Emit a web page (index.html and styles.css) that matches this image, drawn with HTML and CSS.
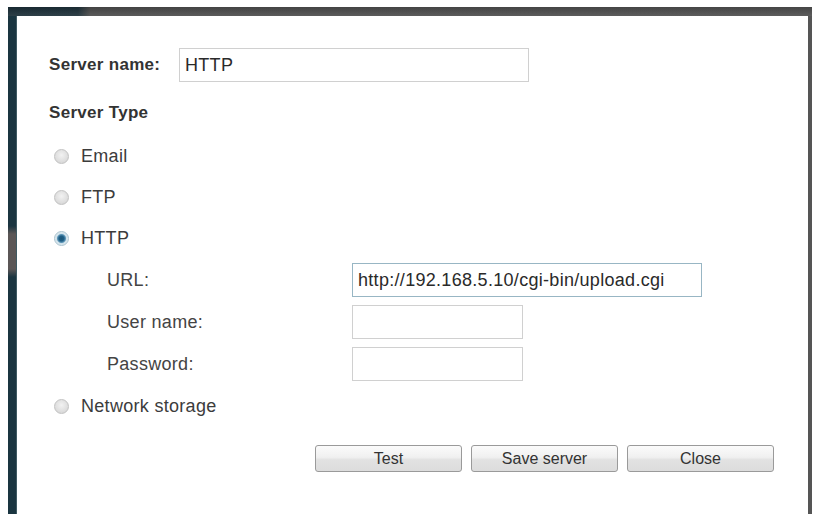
FILE: index.html
```html
<!DOCTYPE html>
<html>
<head>
<meta charset="utf-8">
<link rel="stylesheet" href="styles.css">
</head>
<body>
<div class="frame">
  <div class="topbar"></div>
  <div class="body">
    <div class="lstrip"></div>
    <div class="content">
      <div class="row-name">
        <label class="bold name-label">Server name:</label>
        <input class="field field-name" type="text" value="HTTP">
      </div>
      <div class="bold type-title">Server Type</div>
      <label class="radio-row"><input class="radio" type="radio" name="t"><span>Email</span></label>
      <label class="radio-row"><input class="radio" type="radio" name="t"><span>FTP</span></label>
      <label class="radio-row"><input class="radio" type="radio" name="t" checked><span>HTTP</span></label>
      <div class="sub">
        <div class="sub-row"><span class="sub-label">URL:</span><input class="field field-url" type="text" value="http://192.168.5.10/cgi-bin/upload.cgi"></div>
        <div class="sub-row"><span class="sub-label">User name:</span><input class="field field-short" type="text" value=""></div>
        <div class="sub-row"><span class="sub-label">Password:</span><input class="field field-short" type="password" value=""></div>
      </div>
      <label class="radio-row radio-ns"><input class="radio" type="radio" name="t"><span>Network storage</span></label>
      <div class="buttons">
        <button class="btn">Test</button>
        <button class="btn">Save server</button>
        <button class="btn">Close</button>
      </div>
    </div>
    <div class="rstrip"></div>
  </div>
</div>
</body>
</html>
```
FILE: styles.css
```css
html, body {
  margin: 0;
  padding: 0;
  background: #ffffff;
}
body {
  font-family: "Liberation Sans", Arial, sans-serif;
  color: #3a3a3a;
}
.frame {
  margin: 7px 0 0 8px;
  width: 804px;
}
.topbar {
  height: 9px;
  background:
    linear-gradient(to bottom, rgba(0,0,0,0.12), rgba(255,255,255,0.08)),
    linear-gradient(to right, #1b2f38 0, #1d3039 70px, #4c4c4c 82px, #4f4f4f 100%);
}
.body {
  display: flex;
  height: 498px;
}
.lstrip {
  width: 9px;
  flex: none;
  background: linear-gradient(to bottom,
    #1a3540 0, #1b3540 210px, #5b5656 218px, #5b5656 253px, #1b3540 261px, #1a3540 100%);
  box-shadow: inset -1px 0 0 #3f5a63;
}
.rstrip {
  width: 4px;
  flex: none;
  background: #555555;
}
.content {
  flex: 1;
  padding: 32px 0 0 32px;
  display: flex;
  flex-direction: column;
}
.bold {
  font-weight: bold;
  font-size: 17px;
  letter-spacing: 0.3px;
  color: #333;
}
.row-name {
  display: flex;
  align-items: center;
  height: 34px;
}
.name-label {
  width: 130px;
  flex: none;
}
.field {
  box-sizing: border-box;
  height: 34px;
  border: 1px solid #d0d0d0;
  background: #fff;
  font-family: "Liberation Sans", Arial, sans-serif;
  font-size: 18px;
  letter-spacing: 0.3px;
  color: #2a2a2a;
  padding: 0 5px;
  margin: 0;
  outline: none;
}
.field-name {
  width: 350px;
}
.field-url {
  width: 350px;
  border-color: #98b6c4;
}
.field-short {
  width: 171px;
}
.type-title {
  height: 32px;
  line-height: 32px;
  margin-top: 15px;
}
.radio-row {
  display: flex;
  align-items: center;
  height: 41px;
  font-size: 18px;
  letter-spacing: 0.3px;
  color: #3c3c3c;
}
.type-title + .radio-row {
  margin-top: 7px;
}
.radio {
  appearance: none;
  -webkit-appearance: none;
  box-sizing: border-box;
  width: 15px;
  height: 15px;
  margin: 0 12px 0 5px;
  border-radius: 50%;
  border: 1px solid #c2c2c2;
  background: radial-gradient(circle at 50% 40%, #f2f2f2 0, #dedede 60%, #cfcfcf 100%);
  flex: none;
}
.radio:checked {
  border-color: #a9c2ce;
  background: radial-gradient(circle, #1a5578 0, #1f5f86 2.5px, #5b94b6 4px, #cfe1ea 5px, #e2ecf1 7px);
}
.sub {
  display: flex;
  flex-direction: column;
  gap: 8px;
  margin-top: 4px;
  padding-left: 58px;
}
.sub-row {
  display: flex;
  align-items: center;
  height: 34px;
}
.sub-label {
  width: 245px;
  flex: none;
  font-size: 18px;
  letter-spacing: 0.3px;
  color: #444;
}
.radio-ns {
  height: 40px;
  margin-top: 5px;
}
.buttons {
  display: flex;
  gap: 9px;
  margin-top: 19px;
  padding-left: 266px;
}
.btn {
  box-sizing: border-box;
  width: 147px;
  height: 27px;
  border: 1px solid #9a9a9a;
  border-radius: 3px;
  background: linear-gradient(to bottom, #fbfbfb 0, #f0f0f0 45%, #e2e2e2 55%, #dcdcdc 100%);
  font-family: "Liberation Sans", Arial, sans-serif;
  font-size: 16px;
  color: #333;
  padding: 0;
  margin: 0;
}
```
